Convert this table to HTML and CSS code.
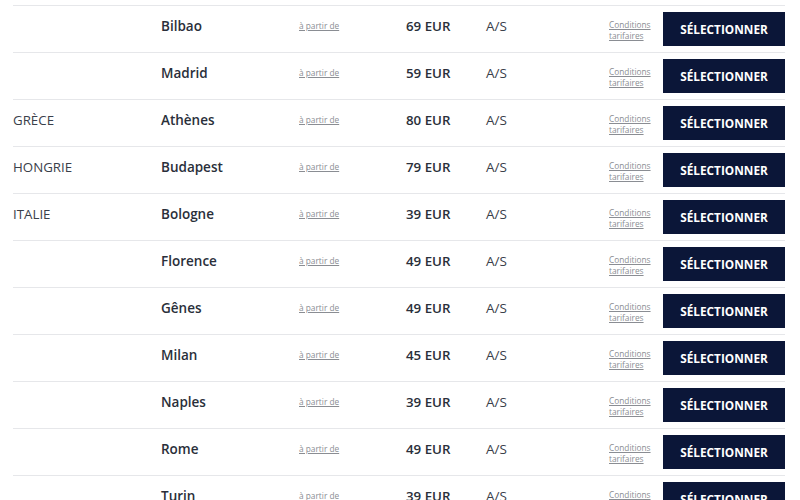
FILE: index.html
```html
<!DOCTYPE html>
<html lang="fr">
<head>
<meta charset="utf-8">
<link rel="stylesheet" href="styles.css">
</head>
<body>
<div class="list">
  <div class="row"><div class="country"></div><div class="city">Bilbao</div><div class="from"><a href="#">à partir de</a></div><div class="price">69 EUR</div><div class="trip">A/S</div><div class="cond"><a href="#">Conditions tarifaires</a></div><button class="btn">SÉLECTIONNER</button></div>
  <div class="row"><div class="country"></div><div class="city">Madrid</div><div class="from"><a href="#">à partir de</a></div><div class="price">59 EUR</div><div class="trip">A/S</div><div class="cond"><a href="#">Conditions tarifaires</a></div><button class="btn">SÉLECTIONNER</button></div>
  <div class="row"><div class="country">GRÈCE</div><div class="city">Athènes</div><div class="from"><a href="#">à partir de</a></div><div class="price">80 EUR</div><div class="trip">A/S</div><div class="cond"><a href="#">Conditions tarifaires</a></div><button class="btn">SÉLECTIONNER</button></div>
  <div class="row"><div class="country">HONGRIE</div><div class="city">Budapest</div><div class="from"><a href="#">à partir de</a></div><div class="price">79 EUR</div><div class="trip">A/S</div><div class="cond"><a href="#">Conditions tarifaires</a></div><button class="btn">SÉLECTIONNER</button></div>
  <div class="row"><div class="country">ITALIE</div><div class="city">Bologne</div><div class="from"><a href="#">à partir de</a></div><div class="price">39 EUR</div><div class="trip">A/S</div><div class="cond"><a href="#">Conditions tarifaires</a></div><button class="btn">SÉLECTIONNER</button></div>
  <div class="row"><div class="country"></div><div class="city">Florence</div><div class="from"><a href="#">à partir de</a></div><div class="price">49 EUR</div><div class="trip">A/S</div><div class="cond"><a href="#">Conditions tarifaires</a></div><button class="btn">SÉLECTIONNER</button></div>
  <div class="row"><div class="country"></div><div class="city">Gênes</div><div class="from"><a href="#">à partir de</a></div><div class="price">49 EUR</div><div class="trip">A/S</div><div class="cond"><a href="#">Conditions tarifaires</a></div><button class="btn">SÉLECTIONNER</button></div>
  <div class="row"><div class="country"></div><div class="city">Milan</div><div class="from"><a href="#">à partir de</a></div><div class="price">45 EUR</div><div class="trip">A/S</div><div class="cond"><a href="#">Conditions tarifaires</a></div><button class="btn">SÉLECTIONNER</button></div>
  <div class="row"><div class="country"></div><div class="city">Naples</div><div class="from"><a href="#">à partir de</a></div><div class="price">39 EUR</div><div class="trip">A/S</div><div class="cond"><a href="#">Conditions tarifaires</a></div><button class="btn">SÉLECTIONNER</button></div>
  <div class="row"><div class="country"></div><div class="city">Rome</div><div class="from"><a href="#">à partir de</a></div><div class="price">49 EUR</div><div class="trip">A/S</div><div class="cond"><a href="#">Conditions tarifaires</a></div><button class="btn">SÉLECTIONNER</button></div>
  <div class="row"><div class="country"></div><div class="city">Turin</div><div class="from"><a href="#">à partir de</a></div><div class="price">39 EUR</div><div class="trip">A/S</div><div class="cond"><a href="#">Conditions tarifaires</a></div><button class="btn">SÉLECTIONNER</button></div>
</div>
</body>
</html>
```

FILE: styles.css
```css
html, body {
  margin: 0;
  padding: 0;
  background: #ffffff;
  overflow: hidden;
}
body {
  font-family: "Open Sans", "Noto Sans", sans-serif;
  color: #2e3440;
}
.list {
  margin: 5px 15px 0 13px;
}
.row {
  display: grid;
  grid-template-columns: 148px 138px 107px 80px 123px 54px 122px;
  align-items: start;
  border-top: 1px solid #e6e7ea;
  padding: 6px 0;
  height: 34px;
}
.country {
  font-size: 13.3px;
  line-height: 20px;
  padding-top: 4px;
  color: #3a404a;
}
.city {
  font-size: 13.5px;
  font-weight: 600;
  line-height: 20px;
  padding-top: 4px;
  color: #2a2f3a;
}
.from {
  font-size: 8.3px;
  line-height: 12px;
  padding-top: 8px;
}
.from a, .cond a {
  color: #8a8d93;
  text-decoration: underline;
}
.price {
  font-size: 13.3px;
  font-weight: 600;
  line-height: 20px;
  padding-top: 4px;
  color: #2a2f3a;
}
.trip {
  font-size: 13.5px;
  line-height: 20px;
  padding-top: 4px;
  color: #3a404a;
}
.cond {
  font-size: 8.3px;
  line-height: 11px;
  padding-top: 7px;
}
.btn {
  width: 122px;
  height: 34px;
  border: 0;
  margin: 0;
  padding: 0;
  background: #0b1638;
  color: #ffffff;
  font-family: "Open Sans", "Noto Sans", sans-serif;
  font-weight: 700;
  font-size: 11.8px;
}
```
